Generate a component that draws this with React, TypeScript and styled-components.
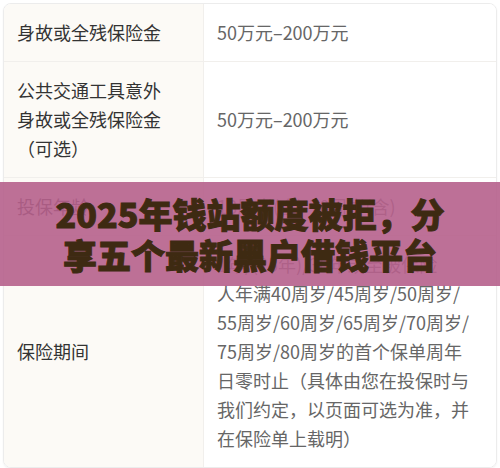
import React from "react";
import styled, { createGlobalStyle } from "styled-components";

const GlobalStyle = createGlobalStyle`
  html, body { margin: 0; padding: 0; background: #ffffff; }
  body { font-family: "Noto Sans CJK SC", "Noto Sans", sans-serif; }
`;

const Page = styled.div`
  position: relative;
  width: 500px;
  height: 468px;
  padding: 3px 3px 0 3px;
  box-sizing: border-box;
  overflow: hidden;
`;

const Card = styled.div`
  border: 1px solid #ececec;
  border-radius: 8px;
  overflow: hidden;
  box-shadow: 0 1px 2px rgba(0, 0, 0, 0.06);
`;

const Row = styled.div<{ $last?: boolean }>`
  display: grid;
  grid-template-columns: 200px 1fr;
  border-bottom: ${(p) => (p.$last ? "none" : "1px solid #f1efec")};
`;

const Cell = styled.div`
  padding: 14px 13px;
  font-size: 18px;
  line-height: 29px;
  display: flex;
  flex-direction: column;
  justify-content: center;
`;

const Label = styled(Cell)`
  background: #fcfaf6;
  color: #333333;
  border-right: 1px solid #f1efec;
`;

const Value = styled(Cell)`
  background: #ffffff;
  color: #666666;
`;

const Line = styled.span`
  display: block;
  white-space: nowrap;
`;

const Banner = styled.div`
  position: absolute;
  left: 0;
  right: 0;
  top: 182px;
  height: 104px;
  background: rgba(182, 96, 140, 0.9);
  display: flex;
  flex-direction: column;
  align-items: center;
  justify-content: center;
`;

const Title = styled.div`
  font-family: "Noto Sans CJK SC", sans-serif;
  font-weight: 900;
  font-size: 34px;
  line-height: 41px;
  color: #3e2a12;
  -webkit-text-stroke: 1px #3e2a12;
  text-align: center;
  white-space: nowrap;
`;

const rows: { label: string[]; value: string[] }[] = [
  { label: ["身故或全残保险金"], value: ["50万元–200万元"] },
  {
    label: ["公共交通工具意外", "身故或全残保险金", "（可选）"],
    value: ["50万元–200万元"],
  },
  { label: ["投保年龄"], value: ["18周岁(含)-70周岁(含)"] },
  {
    label: ["保险期间"],
    value: [
      "1年/(25年)/30年或至被保险",
      "人年满40周岁/45周岁/50周岁/",
      "55周岁/60周岁/65周岁/70周岁/",
      "75周岁/80周岁的首个保单周年",
      "日零时止（具体由您在投保时与",
      "我们约定，以页面可选为准，并",
      "在保险单上载明）",
    ],
  },
];

export default function App() {
  return (
    <>
      <GlobalStyle />
      <Page>
        <Card>
          {rows.map((r, i) => (
            <Row key={i} $last={i === rows.length - 1}>
              <Label>
                {r.label.map((t, j) => (
                  <Line key={j}>{t}</Line>
                ))}
              </Label>
              <Value>
                {r.value.map((t, j) => (
                  <Line key={j}>{t}</Line>
                ))}
              </Value>
            </Row>
          ))}
        </Card>
        <Banner>
          <Title>2025年钱站额度被拒，分</Title>
          <Title>享五个最新黑户借钱平台</Title>
        </Banner>
      </Page>
    </>
  );
}
